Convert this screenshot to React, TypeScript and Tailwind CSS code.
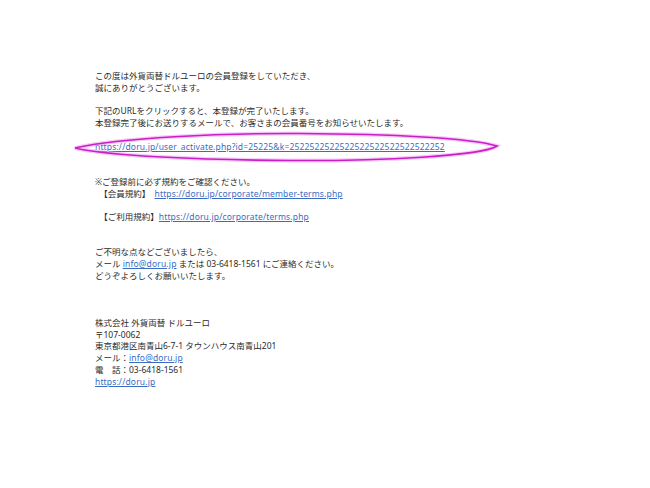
import React from "react";

const L = ({ children }: { children?: React.ReactNode }) => (
  <div className="whitespace-pre h-[11.75px]">{children}</div>
);
const A = ({ children }: { children: React.ReactNode }) => (
  <span className="text-[#3a6cc4] underline decoration-[0.5px] underline-offset-[1px] tracking-[0.15px]">{children}</span>
);

export default function App() {
  return (
    <div className="w-[650px] h-[488px] bg-white relative overflow-hidden">
      <div
        className="pl-[95px] pt-[70px] text-[8.5px] leading-[11.75px] text-[#2b2b2b]"
        style={{ fontFamily: '"Noto Sans", "Noto Sans CJK JP", sans-serif' }}
      >
        <L>この度は外貨両替ドルユーロの会員登録をしていただき、</L>
        <L>誠にありがとうございます。</L>
        <L />
        <L>下記のURLをクリックすると、本登録が完了いたします。</L>
        <L>本登録完了後にお送りするメールで、お客さまの会員番号をお知らせいたします。</L>
        <L />
        <L>
          <A>https://doru.jp/user_activate.php?id=25225&amp;k=2522522522522522522522522522252</A>
        </L>
        <L />
        <L />
        <L>※ご登録前に必ず規約をご確認ください。</L>
        <L>
          {"　【会員規約】　"}
          <A>https://doru.jp/corporate/member-terms.php</A>
        </L>
        <L />
        <L>
          {"　【ご利用規約】"}
          <A>https://doru.jp/corporate/terms.php</A>
        </L>
        <L />
        <L />
        <L>ご不明な点などございましたら、</L>
        <L>
          {"メール "}
          <A>info@doru.jp</A>
          {" または 03-6418-1561 にご連絡ください。"}
        </L>
        <L>どうぞよろしくお願いいたします。</L>
        <L />
        <L />
        <L />
        <L>株式会社 外貨両替 ドルユーロ</L>
        <L>〒107-0062</L>
        <L>東京都港区南青山6-7-1 タウンハウス南青山201</L>
        <L>
          {"メール："}
          <A>info@doru.jp</A>
        </L>
        <L>電　話：03-6418-1561</L>
        <L>
          <A>https://doru.jp</A>
        </L>
      </div>
      <svg
        className="absolute left-0 top-0 pointer-events-none"
        width="650"
        height="488"
        viewBox="0 0 650 488"
      >
        <path
          d="M 75 148 C 120 138, 220 133, 300 133.5 C 390 134, 472 138, 497 146 C 482 156, 380 161, 290 160.5 C 200 160, 110 156, 75 148 Z"
          fill="none"
          stroke="#f4a6f4"
          strokeWidth="4"
          opacity="0.6"
        />
        <path
          d="M 75 148 C 120 138, 220 133, 300 133.5 C 390 134, 472 138, 497 146 C 482 156, 380 161, 290 160.5 C 200 160, 110 156, 75 148 Z"
          fill="none"
          stroke="#c81fc8"
          strokeWidth="1.6"
        />
      </svg>
    </div>
  );
}
